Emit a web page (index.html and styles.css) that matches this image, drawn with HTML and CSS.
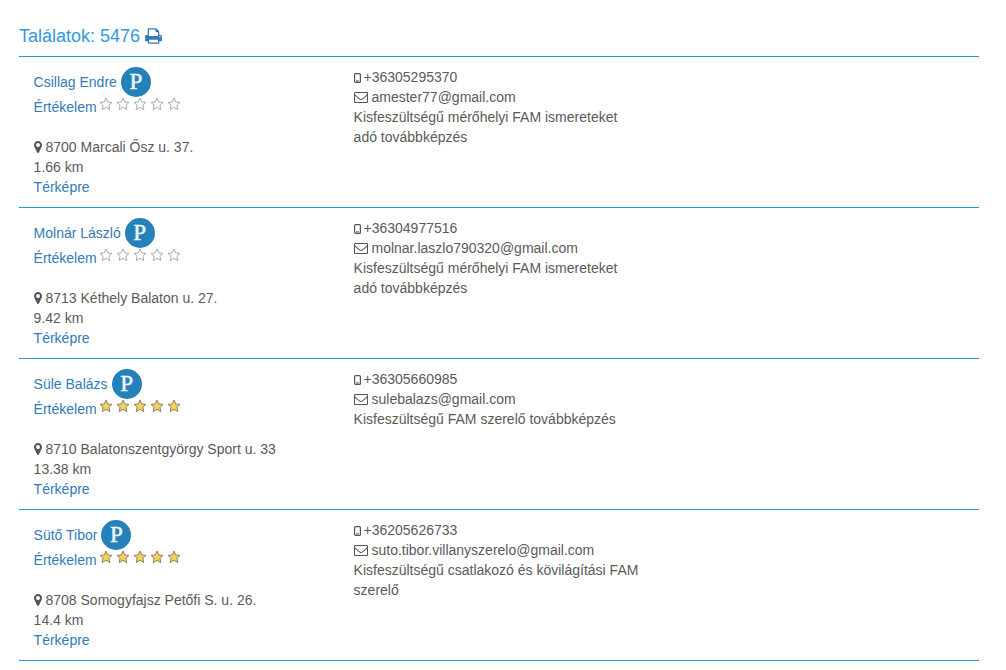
FILE: index.html
```html
<!DOCTYPE html>
<html lang="hu">
<head>
    <meta charset="UTF-8">
    <title>Találatok</title>
    <link rel="stylesheet" href="styles.css">
</head>
<body>
    <!-- ikonok -->
    <svg class="defs" width="0" height="0">
        <symbol id="i-print" viewBox="0 0 1664 1792"><path d="M384 1536h896v-256h-896v256zm0-640h896v-384h-160q-40 0-68-28t-28-68v-160h-640v640zm1152 64q0-26-19-45t-45-19-45 19-19 45 19 45 45 19 45-19 19-45zm128 0v416q0 13-9.5 22.5t-22.5 9.5h-224v160q0 40-28 68t-68 28h-960q-40 0-68-28t-28-68v-160h-224q-13 0-22.5-9.5t-9.5-22.5v-416q0-79 56.5-135.5t135.5-56.5h64v-544q0-40 28-68t68-28h672q40 0 88 20t76 48l152 152q28 28 48 76t20 88v256h64q79 0 135.5 56.5t56.5 135.5z"/></symbol>
        <symbol id="i-marker" viewBox="0 0 1024 1792"><path d="M768 640q0-106-75-181t-181-75-181 75-75 181 75 181 181 75 181-75 75-181zm256 0q0 109-33 179l-364 774q-16 33-47.5 52t-67.5 19-67.5-19-46.5-52l-365-774q-33-70-33-179 0-212 150-362t362-150 362 150 150 362z"/></symbol>
        <symbol id="i-mail" viewBox="0 0 1792 1792"><path d="M1664 1504v-768q-32 36-69 66-268 206-426 338-51 43-83 67t-86.5 48.5-102.5 24.5h-2q-48 0-102.5-24.5t-86.5-48.5-83-67q-158-132-426-338-37-30-69-66v768q0 13 9.5 22.5t22.5 9.5h1472q13 0 22.5-9.5t9.5-22.5zm0-1051v-24.5l-.5-13-3-12.5-5.5-9-9-7.5-14-2.5h-1472q-13 0-22.5 9.5t-9.5 22.5q0 168 147 284 193 152 401 317 6 5 35 29.5t46 37.5 44.5 31.5 50.5 27.5 43 9h2q20 0 43-9t50.5-27.5 44.5-31.5 46-37.5 35-29.5q208-165 401-317 54-43 100.5-115.5t46.5-131.5zm128-37v1088q0 66-47 113t-113 47h-1472q-66 0-113-47t-47-113v-1088q0-66 47-113t113-47h1472q66 0 113 47t47 113z"/></symbol>
        <symbol id="i-phone" viewBox="0 0 7 10"><rect x="0.6" y="0.6" width="5.8" height="8.8" rx="1" fill="none" stroke="currentColor" stroke-width="1.2"/><rect x="2" y="7.4" width="3" height="1" fill="currentColor"/></symbol>
        <symbol id="i-star" viewBox="0 0 14 14"><polygon points="7,1 8.8,5 13,5.4 9.9,8.2 10.8,12.6 7,10.3 3.2,12.6 4.1,8.2 1,5.4 5.2,5"/></symbol>
    </svg>

    <h3 class="title">Találatok: 5476 <svg class="print"><use href="#i-print"/></svg></h3>

    <div class="row">
        <div class="col">
            <div class="name"><a href="#">Csillag Endre</a><span class="badge">P</span></div>
            <div class="rate">
                <a href="#">Értékelem</a>
                <span class="stars">
                    <svg><use href="#i-star"/></svg><svg><use href="#i-star"/></svg><svg><use href="#i-star"/></svg><svg><use href="#i-star"/></svg><svg><use href="#i-star"/></svg>
                </span>
            </div>
            <div class="addr"><svg class="marker"><use href="#i-marker"/></svg> 8700 Marcali Ősz u. 37.</div>
            <div>1.66 km</div>
            <div><a href="#">Térképre</a></div>
        </div>
        <div class="col">
            <div><svg class="phone"><use href="#i-phone"/></svg> +36305295370</div>
            <div><svg class="mail"><use href="#i-mail"/></svg> amester77@gmail.com</div>
            <div>Kisfeszültségű mérőhelyi FAM ismereteket adó továbbképzés</div>
        </div>
    </div>

    <div class="row">
        <div class="col">
            <div class="name"><a href="#">Molnár László</a><span class="badge">P</span></div>
            <div class="rate">
                <a href="#">Értékelem</a>
                <span class="stars">
                    <svg><use href="#i-star"/></svg><svg><use href="#i-star"/></svg><svg><use href="#i-star"/></svg><svg><use href="#i-star"/></svg><svg><use href="#i-star"/></svg>
                </span>
            </div>
            <div class="addr"><svg class="marker"><use href="#i-marker"/></svg> 8713 Kéthely Balaton u. 27.</div>
            <div>9.42 km</div>
            <div><a href="#">Térképre</a></div>
        </div>
        <div class="col">
            <div><svg class="phone"><use href="#i-phone"/></svg> +36304977516</div>
            <div><svg class="mail"><use href="#i-mail"/></svg> molnar.laszlo790320@gmail.com</div>
            <div>Kisfeszültségű mérőhelyi FAM ismereteket adó továbbképzés</div>
        </div>
    </div>

    <div class="row">
        <div class="col">
            <div class="name"><a href="#">Süle Balázs</a><span class="badge">P</span></div>
            <div class="rate">
                <a href="#">Értékelem</a>
                <span class="stars full">
                    <svg><use href="#i-star"/></svg><svg><use href="#i-star"/></svg><svg><use href="#i-star"/></svg><svg><use href="#i-star"/></svg><svg><use href="#i-star"/></svg>
                </span>
            </div>
            <div class="addr"><svg class="marker"><use href="#i-marker"/></svg> 8710 Balatonszentgyörgy Sport u. 33</div>
            <div>13.38 km</div>
            <div><a href="#">Térképre</a></div>
        </div>
        <div class="col">
            <div><svg class="phone"><use href="#i-phone"/></svg> +36305660985</div>
            <div><svg class="mail"><use href="#i-mail"/></svg> sulebalazs@gmail.com</div>
            <div>Kisfeszültségű FAM szerelő továbbképzés</div>
        </div>
    </div>

    <div class="row">
        <div class="col">
            <div class="name"><a href="#">Sütő Tibor</a><span class="badge">P</span></div>
            <div class="rate">
                <a href="#">Értékelem</a>
                <span class="stars full">
                    <svg><use href="#i-star"/></svg><svg><use href="#i-star"/></svg><svg><use href="#i-star"/></svg><svg><use href="#i-star"/></svg><svg><use href="#i-star"/></svg>
                </span>
            </div>
            <div class="addr"><svg class="marker"><use href="#i-marker"/></svg> 8708 Somogyfajsz Petőfi S. u. 26.</div>
            <div>14.4 km</div>
            <div><a href="#">Térképre</a></div>
        </div>
        <div class="col">
            <div><svg class="phone"><use href="#i-phone"/></svg> +36205626733</div>
            <div><svg class="mail"><use href="#i-mail"/></svg> suto.tibor.villanyszerelo@gmail.com</div>
            <div>Kisfeszültségű csatlakozó és kövilágítási FAM szerelő</div>
        </div>
    </div>
</body>
</html>
```

FILE: styles.css
```css
body {
    font-family: "Liberation Sans", Arial, sans-serif;
    font-size: 14px;
    line-height: 20px;
    color: #5a5a5a;
    background-color: white;
    margin: 0;
    padding: 0 27px 0 19px;
}
a {
    color: #337ab7;
    text-decoration: none;
}
.defs {
    position: absolute;
}
.title {
    font-size: 18px;
    font-weight: normal;
    line-height: 20px;
    color: #3498db;
    margin: 0;
    padding: 26px 0 10px;
    border-bottom: 1px solid #1e9ad6;
}
.print {
    width: 17px;
    height: 18px;
    fill: #337ab7;
    vertical-align: -3px;
}
.row {
    display: flex;
    height: 151px;
    box-sizing: border-box;
    padding-top: 10px;
    border-bottom: 1px solid #1e9ad6;
}
.col {
    width: 320px;
    box-sizing: border-box;
    padding: 0 15px 0 14.6px;
}
.name {
    display: flex;
    align-items: center;
    height: 30px;
}
.badge {
    width: 30px;
    height: 30px;
    margin-left: 4px;
    border-radius: 50%;
    background-color: #2581ba;
    color: #eef5fa;
    font-family: "Liberation Serif", serif;
    font-size: 23px;
    line-height: 30px;
    -webkit-text-stroke: 0.5px #eef5fa;
    text-align: center;
}
.rate {
    display: flex;
    margin-bottom: 20px;
}
.stars {
    display: flex;
    gap: 3px;
    margin: 0 0 0 2px;
}
.stars svg {
    width: 14px;
    height: 14px;
    fill: white;
    stroke: #aaa;
    stroke-width: 1;
}
.stars.full svg {
    fill: #f5d05a;
    stroke: #8a8465;
}
.marker {
    width: 8px;
    height: 14px;
    fill: #555;
    vertical-align: -2px;
}
.phone {
    width: 7px;
    height: 10px;
    margin-right: -1px;
    color: #555;
    vertical-align: -1px;
}
.mail {
    width: 14px;
    height: 14px;
    fill: #555;
    vertical-align: -2px;
}
```
